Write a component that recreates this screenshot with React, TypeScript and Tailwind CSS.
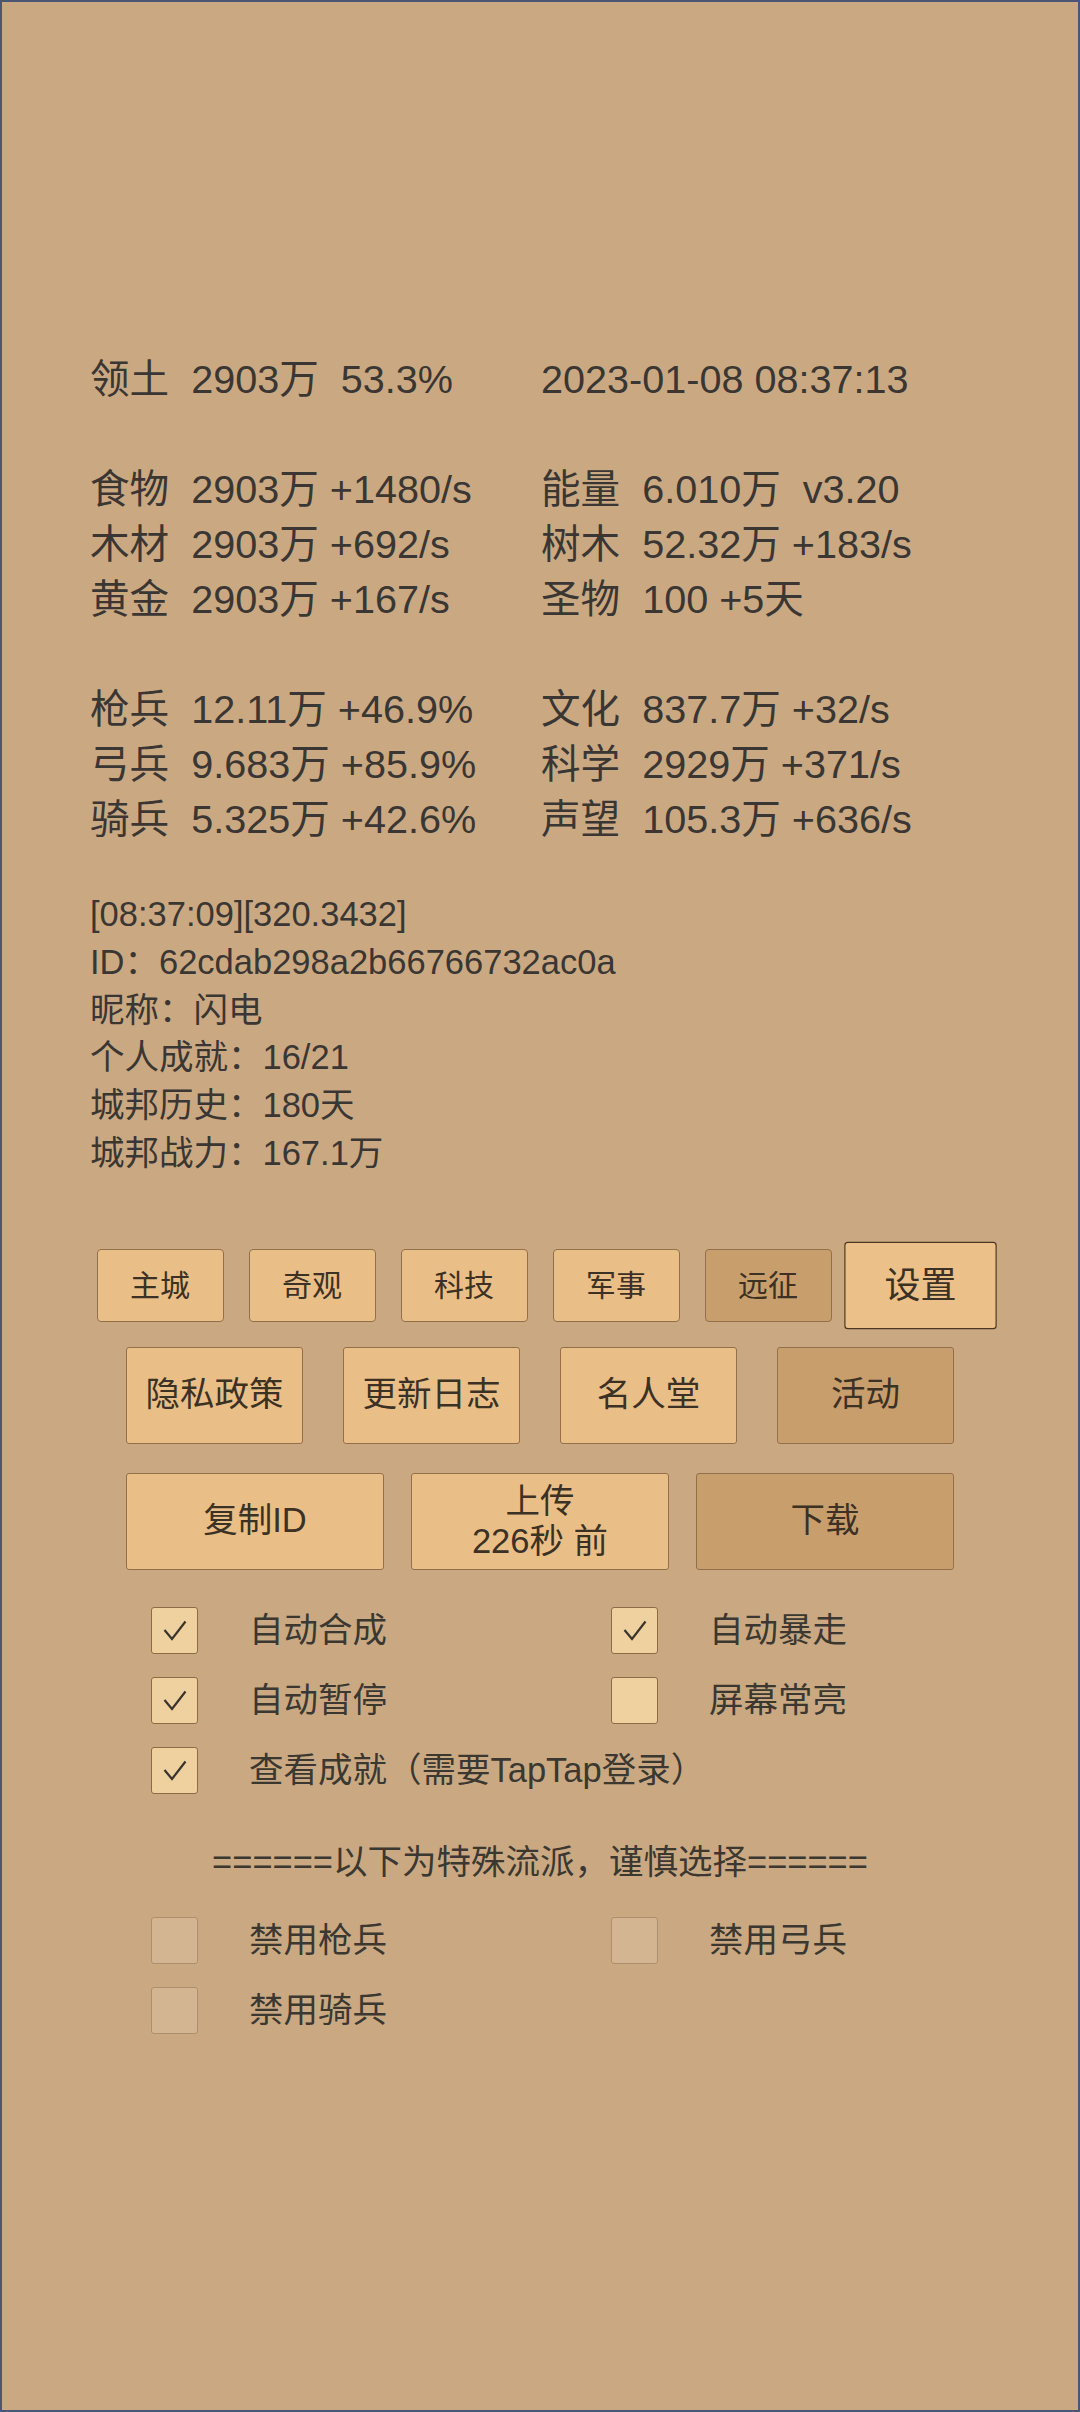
import React from "react";

const stats: [string, string][] = [
  ["领土  2903万  53.3%", "2023-01-08 08:37:13"],
  ["", ""],
  ["食物  2903万 +1480/s", "能量  6.010万  v3.20"],
  ["木材  2903万 +692/s", "树木  52.32万 +183/s"],
  ["黄金  2903万 +167/s", "圣物  100 +5天"],
  ["", ""],
  ["枪兵  12.11万 +46.9%", "文化  837.7万 +32/s"],
  ["弓兵  9.683万 +85.9%", "科学  2929万 +371/s"],
  ["骑兵  5.325万 +42.6%", "声望  105.3万 +636/s"],
];

const info = [
  "[08:37:09][320.3432]",
  "ID：62cdab298a2b66766732ac0a",
  "昵称：闪电",
  "个人成就：16/21",
  "城邦历史：180天",
  "城邦战力：167.1万",
];

function Check() {
  return (
    <svg width="24" height="21" viewBox="0 0 24 21" fill="none">
      <polyline points="1.5,10 9,19 22.5,1.5" stroke="#3a342c" strokeWidth="2.2" fill="none" />
    </svg>
  );
}

function Box({ state }: { state: "on" | "off" | "disabled" }) {
  const cls =
    state === "disabled"
      ? "bg-[#d3b691] border-[#ad8f6d]"
      : "bg-[#efd09f] border-[#8c6b48]";
  return (
    <div className={`w-[47px] h-[47px] shrink-0 rounded-[3px] border ${cls} flex items-center justify-center`}>
      {state === "on" ? <Check /> : null}
    </div>
  );
}

function Opt({ state, label }: { state: "on" | "off" | "disabled"; label: string }) {
  return (
    <div className="flex items-center h-[47px]">
      <Box state={state} />
      <span className="ml-[51px] text-[34.5px] leading-[47px] text-[#3b3731] whitespace-nowrap">{label}</span>
    </div>
  );
}

export default function App() {
  const tabBase =
    "w-[127px] h-[73px] rounded-[4px] border-[1.5px] border-[#93704b] flex items-center justify-center text-[30px] text-[#3b3124]";
  const btnBase =
    "h-[97px] rounded-[3px] border-[1.5px] border-[#93704b] flex items-center justify-center text-[34.5px] text-[#3b3124]";
  return (
    <div className="w-[1080px] h-[2412px] bg-[#caa982] border-2 border-[#4b5575] font-['Liberation_Sans','Noto_Sans_CJK_SC',sans-serif] text-[#3a3633] overflow-hidden">
      {/* stats */}
      <div className="pt-[350px] pl-[88px] grid grid-cols-[451px_1fr] text-[39.6px] leading-[55px] whitespace-pre">
        {stats.map((r, i) => (
          <React.Fragment key={i}>
            <div className="h-[55px]">{r[0]}</div>
            <div className="h-[55px]">{r[1]}</div>
          </React.Fragment>
        ))}
      </div>

      {/* info */}
      <div className="mt-[44px] pl-[88px] text-[34.5px] leading-[47.8px]">
        {info.map((t) => (
          <div key={t}>{t}</div>
        ))}
      </div>

      {/* tabs */}
      <div className="mt-[71px] flex justify-center gap-[25px]">
        <div className={`${tabBase} bg-[#eabf87]`}>主城</div>
        <div className={`${tabBase} bg-[#eabf87]`}>奇观</div>
        <div className={`${tabBase} bg-[#eabf87]`}>科技</div>
        <div className={`${tabBase} bg-[#eabf87]`}>军事</div>
        <div className={`${tabBase} bg-[#c99e6d]`}>远征</div>
        <div className="w-[127px] h-[73px] scale-[1.2] rounded-[3px] border-[1.5px] border-[#4e3823] bg-[#ebc089] flex items-center justify-center text-[30px] text-[#3b3124]">
          设置
        </div>
      </div>

      {/* row 2 */}
      <div className="mt-[25px] flex justify-center gap-[40px]">
        <div className={`${btnBase} w-[177px] bg-[#eabf87]`}>隐私政策</div>
        <div className={`${btnBase} w-[177px] bg-[#eabf87]`}>更新日志</div>
        <div className={`${btnBase} w-[177px] bg-[#eabf87]`}>名人堂</div>
        <div className={`${btnBase} w-[177px] bg-[#c99e6d]`}>活动</div>
      </div>

      {/* row 3 */}
      <div className="mt-[29px] flex justify-center gap-[27px]">
        <div className={`${btnBase} w-[258px] bg-[#eabf87]`}>复制ID</div>
        <div className={`${btnBase} w-[258px] bg-[#eabf87] flex-col leading-[40px] text-center`}>
          <span>上传</span>
          <span>226秒 前</span>
        </div>
        <div className={`${btnBase} w-[258px] bg-[#c99e6d]`}>下载</div>
      </div>

      {/* options */}
      <div className="mt-[37px] pl-[149px] grid grid-cols-[460px_1fr] gap-y-[23px]">
        <Opt state="on" label="自动合成" />
        <Opt state="on" label="自动暴走" />
        <Opt state="on" label="自动暂停" />
        <Opt state="off" label="屏幕常亮" />
        <div className="col-span-2">
          <Opt state="on" label="查看成就（需要TapTap登录）" />
        </div>
      </div>

      <div className="mt-[44px] text-center text-[34.5px] leading-[48px] text-[#3b3731]">
        ======以下为特殊流派，谨慎选择======
      </div>

      <div className="mt-[31px] pl-[149px] grid grid-cols-[460px_1fr] gap-y-[23px]">
        <Opt state="disabled" label="禁用枪兵" />
        <Opt state="disabled" label="禁用弓兵" />
        <Opt state="disabled" label="禁用骑兵" />
      </div>
    </div>
  );
}
